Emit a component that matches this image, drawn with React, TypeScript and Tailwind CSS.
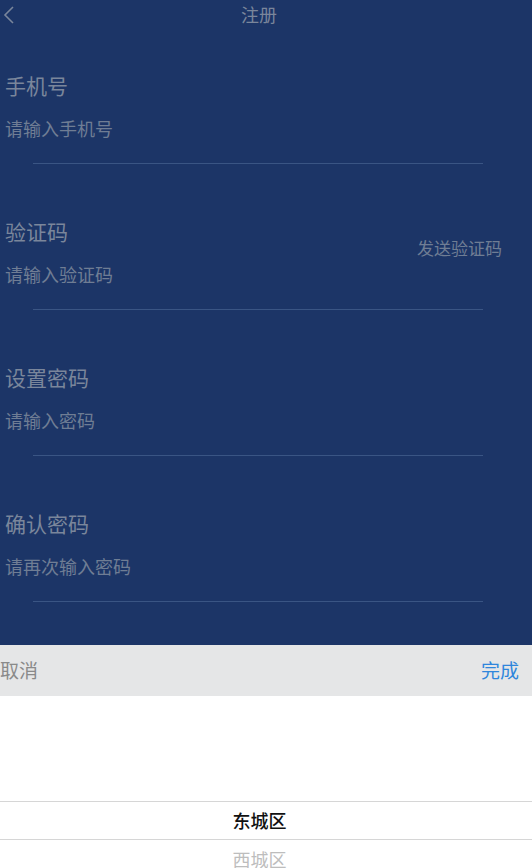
import React from 'react';

const FIELDS = [
  { label: '手机号', placeholder: '请输入手机号' },
  { label: '验证码', placeholder: '请输入验证码', action: '发送验证码' },
  { label: '设置密码', placeholder: '请输入密码' },
  { label: '确认密码', placeholder: '请再次输入密码' },
];

const font = { fontFamily: '"Noto Sans CJK SC", "Noto Sans", sans-serif' };

function Field({ label, placeholder, action }: { label: string; placeholder: string; action?: string }) {
  return (
    <div className="relative flex flex-col pt-[41px] pb-[12px]">
      <div className="h-[28px] pl-[5px] text-[21px] leading-[28px] text-[#7a869b]">{label}</div>
      <div className="mt-[17px] h-[25px] pl-[5px] text-[18px] leading-[25px] text-[#6f7d94]">{placeholder}</div>
      <div className="mt-[22px] ml-[33px] mr-[49px] h-[1px] bg-[#3a5584]" />
      {action && (
        <button className="absolute right-[30px] top-[60px] text-[17px] leading-[24px] text-[#6f7d94]">
          {action}
        </button>
      )}
    </div>
  );
}

export default function App() {
  return (
    <div className="flex h-[868px] w-[532px] flex-col overflow-hidden bg-white" style={font}>
      {/* form area */}
      <div className="flex shrink-0 flex-col bg-[#1c3567] pb-[31px]">
        <div className="relative flex h-[30px] items-start justify-center pr-[14px]">
          <svg className="absolute left-[2px] top-[5px]" width="14" height="20" viewBox="0 0 14 20" fill="none">
            <path d="M11 2 L3 10 L11 18" stroke="#7a869b" strokeWidth="1.6" />
          </svg>
          <span className="text-[18px] leading-[28px] text-[#7a869b]">注册</span>
        </div>
        {FIELDS.map((f) => (
          <Field key={f.label} {...f} />
        ))}
      </div>

      {/* picker toolbar */}
      <div className="flex h-[51px] shrink-0 items-center justify-between bg-[#e5e6e7] pr-[13px]">
        <span className="text-[19px] text-[#8a8a8a]">取消</span>
        <span className="text-[19px] text-[#2f86dc]">完成</span>
      </div>

      {/* picker wheel */}
      <div className="flex min-h-0 flex-1 flex-col overflow-hidden bg-white">
        <div className="h-[105px] shrink-0" />
        <div className="flex h-[39px] shrink-0 items-center justify-center border-y border-[#d6d6d6] pr-[13px] text-[18px] font-medium text-[#111]">
          东城区
        </div>
        <div className="flex shrink-0 justify-center pt-[7px] pr-[13px] text-[18px] leading-[24px] text-[#bdbdbd]">
          西城区
        </div>
      </div>
    </div>
  );
}
